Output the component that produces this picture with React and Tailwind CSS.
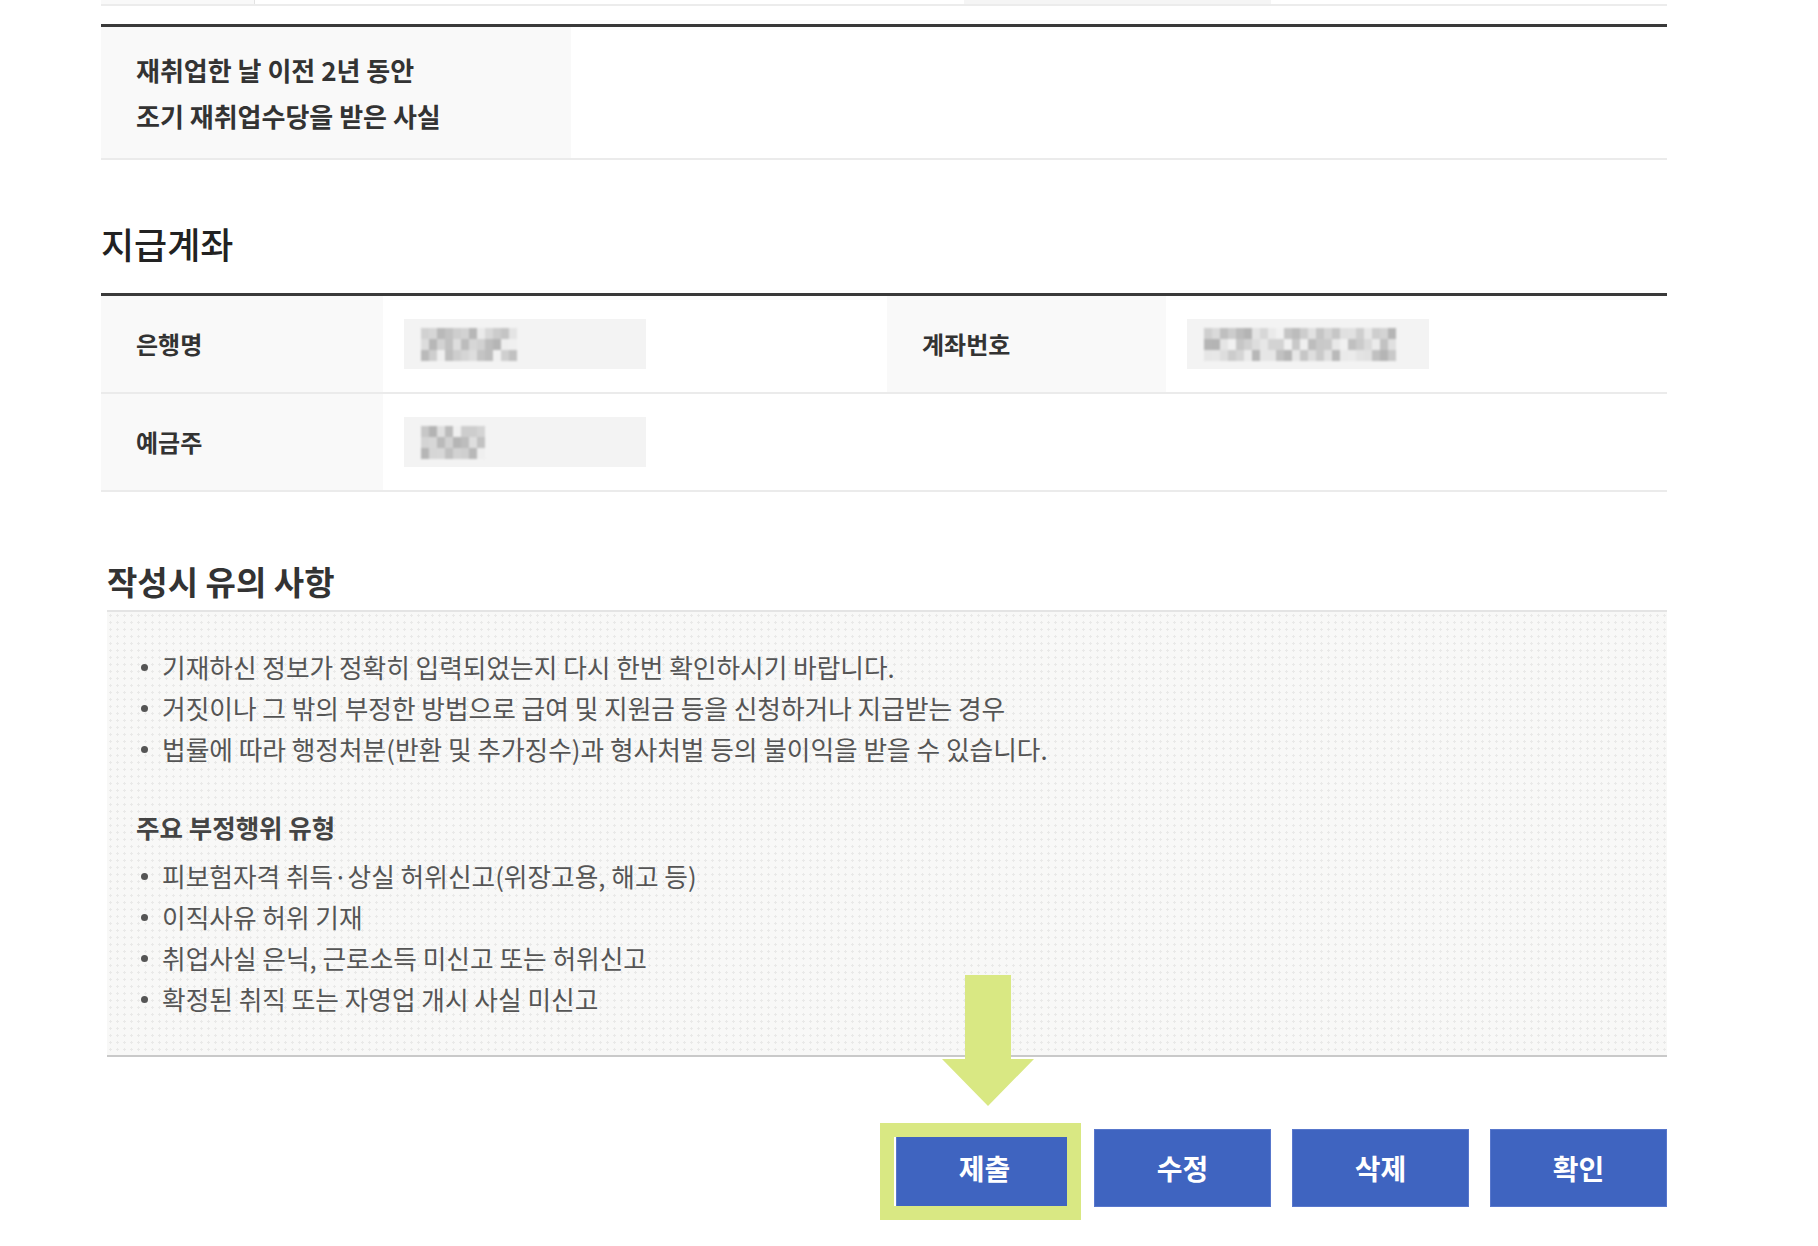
import React from 'react';

const font = { fontFamily: '"Noto Sans CJK KR", "Noto Sans", sans-serif' };

const notices = [
    '기재하신 정보가 정확히 입력되었는지 다시 한번 확인하시기 바랍니다.',
    '거짓이나 그 밖의 부정한 방법으로 급여 및 지원금 등을 신청하거나 지급받는 경우',
    '법률에 따라 행정처분(반환 및 추가징수)과 형사처벌 등의 불이익을 받을 수 있습니다.',
];

const fraudTypes = [
    '피보험자격 취득·상실 허위신고(위장고용, 해고 등)',
    '이직사유 허위 기재',
    '취업사실 은닉, 근로소득 미신고 또는 허위신고',
    '확정된 취직 또는 자영업 개시 사실 미신고',
];

// pixelated (masked) values, shades generated once from a seed
function shades(seed, count) {
    let s = seed;
    const out = [];
    for (let i = 0; i < count; i++) {
        s = (s * 9301 + 49297) % 233280;
        const v = Math.round(178 + (s / 233280) * 64);
        out.push(`rgb(${v},${v},${v})`);
    }
    return out;
}

function Mosaic({ cols, seed }) {
    const cells = shades(seed, cols * 3);
    return (
        <div className="grid blur-[1px]" style={{ gridTemplateColumns: `repeat(${cols}, 8px)` }}>
            {cells.map((c, i) => (
                <div key={i} className="h-[11px]" style={{ backgroundColor: c }} />
            ))}
        </div>
    );
}

function Masked({ cols, seed }) {
    return (
        <div className="h-[50px] w-[242px] bg-[#f3f3f3] flex items-center pl-[17px]">
            <Mosaic cols={cols} seed={seed} />
        </div>
    );
}

function Bullets({ items }) {
    return (
        <ul>
            {items.map((item, i) => (
                <li key={i} className="flex items-center h-[41px] text-[25.7px] text-[#555]">
                    <span className="w-[7px] h-[7px] rounded-full bg-[#555] ml-[10px] mr-[14px] shrink-0" />
                    {item}
                </li>
            ))}
        </ul>
    );
}

export default function App() {
    return (
        <div className="relative w-full h-[1246px] bg-white overflow-hidden text-[#333]" style={font}>
            <div className="ml-[101px] w-[1566px]">
                {/* cut-off row above */}
                <div className="flex h-[6px] border-b-2 border-[#ececec]">
                    <div className="w-[154px] bg-[#f9f9f9] border-r border-[#e3e3e3]" />
                    <div className="w-[709px]" />
                    <div className="w-[307px] bg-[#f5f5f5]" />
                </div>

                <div className="mt-[18px] border-t-[3px] border-[#3a3a3a]">
                    <div className="flex h-[133px] border-b-2 border-[#ebebeb]">
                        <div className="w-[470px] bg-[#f9f9f9] pl-[35px] flex flex-col justify-center gap-[8px] text-[26px] font-bold text-[#333] leading-[38px]">
                            <p>재취업한 날 이전 2년 동안</p>
                            <p>조기 재취업수당을 받은 사실</p>
                        </div>
                        <div className="flex-1" />
                    </div>
                </div>

                <h2 className="mt-[63px] h-[40px] leading-[40px] text-[36px] font-medium text-[#222]">지급계좌</h2>

                <div className="mt-[30px] border-t-[3px] border-[#3a3a3a]">
                    <div className="flex h-[98px] border-b-2 border-[#ebebeb]">
                        <div className="w-[282px] bg-[#f9f9f9] pl-[35px] flex items-center text-[24px] font-bold">은행명</div>
                        <div className="w-[504px] pl-[21px] flex items-center">
                            <Masked cols={12} seed={7} />
                        </div>
                        <div className="w-[279px] bg-[#f9f9f9] pl-[35px] flex items-center text-[24px] font-bold">계좌번호</div>
                        <div className="flex-1 pl-[21px] flex items-center">
                            <Masked cols={24} seed={31} />
                        </div>
                    </div>
                    <div className="flex h-[98px] border-b-2 border-[#ebebeb]">
                        <div className="w-[282px] bg-[#f9f9f9] pl-[35px] flex items-center text-[24px] font-bold">예금주</div>
                        <div className="flex-1 pl-[21px] flex items-center">
                            <Masked cols={8} seed={53} />
                        </div>
                    </div>
                </div>
            </div>

            <div className="ml-[107px] w-[1560px]">
                <h3 className="mt-[69px] h-[40px] leading-[40px] text-[33px] font-bold text-[#333]">작성시 유의 사항</h3>

                <div className="mt-[9px] border-t-2 border-b-2 border-t-[#e4e4e4] border-b-[#c9c9c9] bg-[#f8f8f7] bg-[radial-gradient(circle,#e9e9e8_1px,transparent_1.3px)] bg-[length:7px_7px] pl-[24px] pt-[35px] pb-[35px]">
                    <Bullets items={notices} />
                    <p className="mt-[36px] h-[41px] leading-[41px] pl-[5px] text-[25.5px] font-bold text-[#444]">주요 부정행위 유형</p>
                    <div className="mt-[9px]">
                        <Bullets items={fraudTypes} />
                    </div>
                </div>

                <div className="mt-[72px] flex justify-end gap-[21px]">
                    {['제출', '수정', '삭제', '확인'].map((label) => (
                        <button
                            key={label}
                            className="w-[177px] h-[78px] bg-[#3f64c0] border border-[#5877cc] text-white text-[28px] font-bold"
                        >
                            {label}
                        </button>
                    ))}
                </div>
            </div>

            {/* annotation: arrow + highlight */}
            <svg className="absolute left-[942px] top-[975px]" width="92" height="131" viewBox="0 0 92 131">
                <path d="M23 0 H69 V84 H92 L46 131 L0 84 H23 Z" fill="#d9e883" />
            </svg>
            <div className="absolute left-[880px] top-[1123px] w-[201px] h-[97px] border-[14px] border-[#d9e883]" />
        </div>
    );
}
